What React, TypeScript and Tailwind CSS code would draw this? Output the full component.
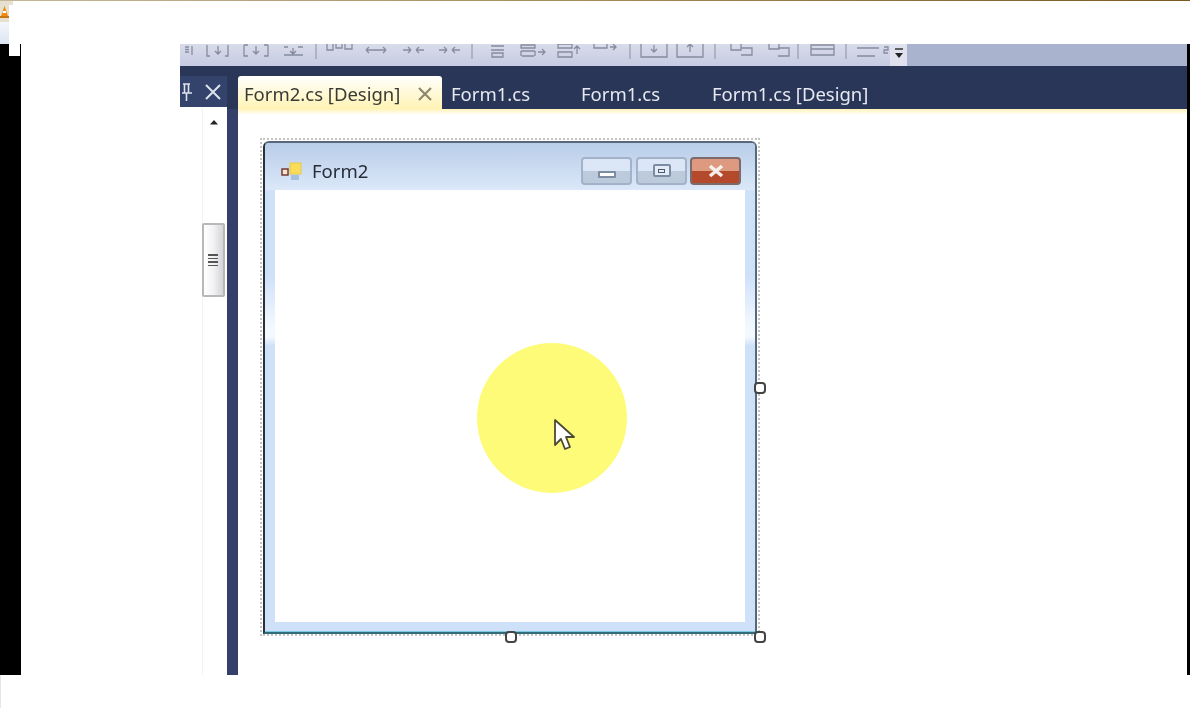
const toolbarGroups = [
  "M5 3h4M5 8h4M9 5.5H5M12 2v9",
  "M27 1v11h3M48 1v11h-3M38 2v7M35 7l3 3 3-3",
  "M64 1v11h4M88 1v11h-4M76 2v7M73 7l3 3 3-3M64 1h4M84 1h4",
  "M104 3h4M118 3h5M104 11h19M113 4v5M110 7l3 3 3-3",
  "M147 0v6h6V0M156 0v4h6V0M165 0v5h7V0",
  "M186 6h20M186 6l3-3M186 6l3 3M206 6l-3-3M206 6l-3 3",
  "M223 6h8M231 6l-3-3M231 6l-3 3M236 6h8M236 6l3-3M236 6l3 3",
  "M259 6h8M267 6l-3-3M267 6l-3 3M272 6h8M272 6l3-3M272 6l3 3",
  "M311 2h13M311 6h13M312 9h11v4h-11z",
  "M341 1h14v3h-14zM341 7h14M341 7v5M355 7v5M342 12h12M358 8h7M362 5l3 3-3 3",
  "M378 0h14v4h-14zM378 8h14v5h-14zM397 10V3M394 5l3-3 3 3",
  "M414 0v4h13V0M430 3h6M433 0l3 3-3 3",
  "M461 0v13h26V0M474 1v7M471 5l3 3 3-3",
  "M497 0v13h26V0M510 8V1M507 3l3-3 3 3",
  "M551 0v6h10V0M561 4h11v7h-11",
  "M589 0v5h10V0M598 4h11v8h-11",
  "M631 1h23v10h-23zM631 5h23",
  "M677 4h22M677 12h18M704 3h4v3h-4v3h4",
];

const separators = [136, 292, 450, 535, 618, 666];

function Toolbar() {
  return (
    <div className="flex h-[22px] bg-gradient-to-b from-[#d8dbe9] to-[#c6cbe3]">
      <div className="w-[710px] shrink-0 overflow-hidden">
        <svg width="710" height="22" fill="none" stroke="#858c9f" strokeWidth="1.3" className="blur-[0.6px]">
          {toolbarGroups.map((d) => (
            <path key={d} d={d} />
          ))}
          {separators.map((x) => (
            <path key={x} d={`M${x} 0v15`} stroke="#9aa1b5" />
          ))}
        </svg>
      </div>
      <div className="flex w-[17px] items-start justify-center bg-[#dfe2ee] pt-[3px]">
        <svg width="10" height="14" className="blur-[0.3px]">
          <path d="M1 2h8" stroke="#333" strokeWidth="1.5" />
          <path d="M1 6h8l-4 5z" fill="#222" />
        </svg>
      </div>
      <div className="flex-1 bg-[#aab3cd]" />
    </div>
  );
}

function TabBar() {
  return (
    <div className="flex h-[43px] items-end bg-[#2a3658] text-[18.5px] leading-[35px] text-[#e6e9f0]">
      <div className="mb-[2px] flex h-[31px] w-[47px] items-center bg-[#33436b]">
        <svg width="47" height="31" fill="none" stroke="#dde2ec" strokeWidth="2">
          <path d="M3 8h7M4.5 8v9M8.5 8v9M2 17h10M6.5 17v8" strokeWidth="1.6" />
          <path d="M26 9l14 14M40 9L26 23" />
        </svg>
      </div>
      <div className="ml-[11px] flex h-[33px] w-[204px] items-center rounded-t-[3px] bg-gradient-to-b from-white via-[#fff9d8] to-[#fff3b4] pl-[6px] pt-[2px] text-[#3a3a34]">
        <span className="w-[173px] blur-[0.3px]">Form2.cs [Design]</span>
        <svg width="16" height="16" fill="none" stroke="#8d8770" strokeWidth="2.2">
          <path d="M2 2l12 12M14 2L2 14" />
        </svg>
      </div>
      <span className="ml-[9px] h-[33px] w-[130px] blur-[0.3px]">Form1.cs</span>
      <span className="h-[33px] w-[131px] blur-[0.3px]">Form1.cs</span>
      <span className="h-[33px] blur-[0.3px]">Form1.cs [Design]</span>
    </div>
  );
}

function SidePanel() {
  return (
    <div className="relative -mt-[2px] flex w-[47px] shrink-0 justify-end bg-white">
      <div className="flex w-[25px] flex-col items-center border-l border-[#f3f3f3] pr-[2px] pt-[12px]">
        <svg width="10" height="6">
          <path d="M1 5.5L5 1l4 4.5z" fill="#222" />
        </svg>
        <div className="mt-[98px] -ml-[2px] flex h-[74px] w-[23px] items-center justify-center rounded-[2px] border-2 border-[#b8b8b8] bg-gradient-to-r from-white via-[#f2f2f4] to-[#d4d4d9] blur-[0.3px]">
          <div className="flex w-[10px] flex-col gap-[2px]">
            <div className="h-[1.5px] bg-[#555]" />
            <div className="h-[1.5px] bg-[#555]" />
            <div className="h-[1.5px] bg-[#555]" />
            <div className="h-[1.5px] bg-[#555]" />
          </div>
        </div>
      </div>
    </div>
  );
}

function CaptionButtons() {
  return (
    <div className="flex gap-[3px] blur-[0.4px]">
      <div className="mr-[1px] flex h-[28px] w-[51px] items-end justify-center rounded-[4px] border-2 border-[#a3b2c8] bg-gradient-to-b from-[#dbe7f6] from-50% to-[#bccadb] to-50% pb-[5px]">
        <div className="h-[7px] w-[18px] rounded-[1px] border-2 border-[#7c8ca3] bg-white" />
      </div>
      <div className="flex h-[28px] w-[51px] items-center justify-center rounded-[4px] border-2 border-[#a3b2c8] bg-gradient-to-b from-[#dbe7f6] from-50% to-[#bccadb] to-50%">
        <div className="flex h-[13px] w-[18px] items-center justify-center rounded-[2px] border-2 border-[#7c8ca3] bg-[#e3ebf5]">
          <div className="h-[4px] w-[7px] border border-[#4d5c72]" />
        </div>
      </div>
      <div className="flex h-[28px] w-[51px] items-center justify-center rounded-[4px] border-2 border-[#7d6a6a] bg-gradient-to-b from-[#dd9a80] from-50% to-[#b4492c] to-50%">
        <svg width="18" height="14" fill="none" stroke="#f6f0ec" strokeWidth="3.5">
          <path d="M3 2l12 10M15 2L3 12" />
        </svg>
      </div>
    </div>
  );
}

function Form() {
  return (
    <div className="relative ml-[22px] mt-[23px] h-[498px] w-[500px] border-2 border-dotted border-[#c4c4c4] p-[1px]">
      <div className="flex h-[493px] w-[494px] flex-col overflow-hidden rounded-t-[6px] border-2 border-t-[#59677a] border-r-[#55697c] border-b-[#2f6b78] border-l-[#2a2f38] bg-[#cfe1f8]">
        <div className="flex h-[47px] shrink-0 items-center bg-gradient-to-b from-[#b9cde8] to-[#dbe8f9] pl-[16px] pr-[14px] pt-[8px]">
          <svg width="22" height="20" className="shrink-0 blur-[0.3px]">
            <rect x="1" y="8" width="6" height="6" fill="#f6e7d0" stroke="#7a3a30" strokeWidth="1.5" />
            <rect x="9" y="2" width="11" height="11" fill="#f8dc5a" stroke="#e4c94a" />
            <rect x="10" y="14" width="8" height="5" fill="#a8c0e0" />
          </svg>
          <span className="ml-[9px] flex-1 text-[18.5px] text-[#262c38] blur-[0.3px]">Form2</span>
          <CaptionButtons />
        </div>
        <div className="flex h-[432px] shrink-0">
          <div className="w-[10px] bg-[linear-gradient(to_bottom,#cfe1f8_20%,#f4f9ff_32%,#f4f9ff_34%,#cfe1f8_36%)]" />
          <div className="flex-1 bg-white" />
          <div className="w-[10px] bg-[linear-gradient(to_bottom,#cfe1f8_20%,#f4f9ff_32%,#f4f9ff_34%,#cfe1f8_36%)]" />
        </div>
        <div className="flex-1 border-b border-[#7cc8e0]" />
      </div>
      <div className="absolute left-[215px] top-[203px] h-[150px] w-[150px] rounded-full bg-[#fdfb78] blur-[0.5px]" />
      <svg width="24" height="34" className="absolute left-[291px] top-[278px] blur-[0.3px]">
        <path
          d="M2 2v25l6-6 4 10 5-2-4-10h8z"
          fill="#fff"
          stroke="#4b4a33"
          strokeWidth="1.8"
          strokeLinejoin="round"
        />
      </svg>
      <div className="absolute left-[492px] top-[242px] h-[12px] w-[12px] rounded-[4px] border-2 border-[#444] bg-white" />
      <div className="absolute left-[243px] top-[491px] h-[12px] w-[12px] rounded-[4px] border-2 border-[#444] bg-white" />
      <div className="absolute left-[492px] top-[491px] h-[12px] w-[12px] rounded-[4px] border-2 border-[#444] bg-white" />
    </div>
  );
}

export default function App() {
  return (
    <div className="flex h-[708px] w-[1190px] flex-col overflow-hidden bg-white font-['Noto_Sans','Open_Sans',sans-serif]">
      <div className="relative h-[44px] shrink-0">
        <div className="h-[1px] bg-gradient-to-r from-[#c4b89a] via-[#a68a58] to-[#7a5a20]" />
        <div className="flex h-[21px] w-[9px] items-center justify-center bg-[#e6e0d0]">
          <svg width="9" height="12">
            <path d="M4.5 0L8 10H1z" fill="#f08a10" />
            <path d="M3 5h3v2H2.5z" fill="#fff" />
            <path d="M0 10h9v2H0z" fill="#c87410" />
          </svg>
        </div>
        <div className="h-[22px] w-[9px] bg-gradient-to-b from-[#f4f6fa] to-[#dce5f4]" />
        <div className="absolute left-[9px] top-[1px] h-[4px] w-[4px] bg-[#e6e0d0]" />
      </div>
      <div className="flex h-[631px] shrink-0">
        <div className="relative w-[21px] shrink-0 bg-black">
          <div className="absolute left-[9px] top-0 h-[12px] w-[11px] bg-white" />
        </div>
        <div className="w-[159px] shrink-0 bg-white" />
        <div className="flex min-w-0 flex-1 flex-col">
          <Toolbar />
          <TabBar />
          <div className="flex flex-1">
            <SidePanel />
            <div className="w-[11px] shrink-0 bg-[#34406a]" />
            <div className="flex-1">
              <div className="h-[6px] bg-gradient-to-b from-[#fff3b8] to-white" />
              <Form />
            </div>
          </div>
        </div>
        <div className="w-[3px] shrink-0 bg-black" />
      </div>
      <div className="flex-1 border-l border-[#e6e6e6] bg-white" />
    </div>
  );
}
